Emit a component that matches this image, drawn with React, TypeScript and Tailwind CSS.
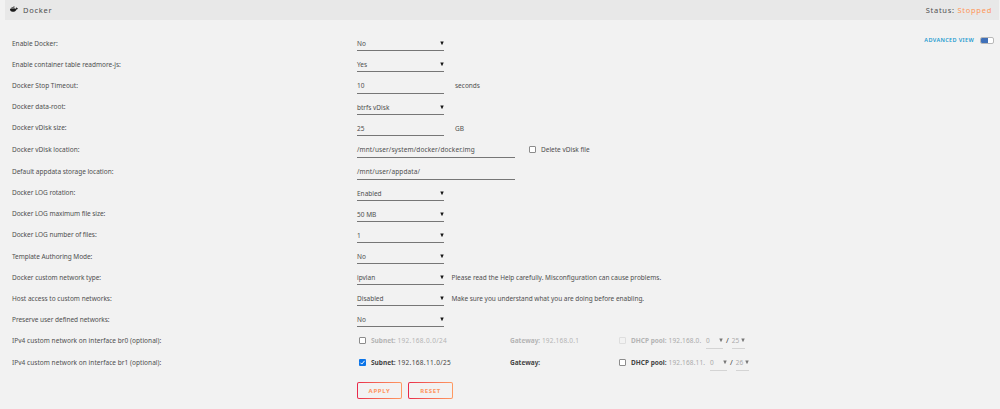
import type { ReactNode } from "react";
import { FaDocker } from "react-icons/fa";

function Caret({ dim = false }: { dim?: boolean }) {
  return (
    <svg viewBox="0 0 4 4" className={`h-1 w-1 shrink-0 ${dim ? "fill-[#777]" : "fill-[#161616]"}`}>
      <path d="M0.3 0.4H3.7L2.3 3.8H1.7Z" />
    </svg>
  );
}

function Field({ value, wide = false, select = false }: { value: string; wide?: boolean; select?: boolean }) {
  return (
    <div
      className={`flex h-full items-start justify-between border-b border-[#767676] pt-2 ${wide ? "w-[158px] tracking-[0.12px]" : "w-[87px]"}`}
    >
      <span>{value}</span>
      {select && (
        <span className="flex h-[10px] items-center">
          <Caret />
        </span>
      )}
    </div>
  );
}

type RowProps = { label: string; tall?: boolean; raised?: boolean; tracking?: string; children: ReactNode };

function Row({ label, tall = false, raised = false, tracking = "", children }: RowProps) {
  return (
    <div className={`flex ${tall ? "h-[22px]" : "h-[21px]"}`}>
      <div className={`w-[345px] shrink-0 ${raised ? "pt-[7px]" : "pt-2"} ${tracking}`}>{label}</div>
      {children}
    </div>
  );
}

function Box({ checked = false, dim = false }: { checked?: boolean; dim?: boolean }) {
  if (checked) {
    return (
      <svg viewBox="0 0 7 7" className="h-[7px] w-[7px] shrink-0">
        <rect width="7" height="7" rx="1" fill="#0b74e8" />
        <path d="M1.4 3.7L2.8 5.1L5.6 1.8" fill="none" stroke="#fff" strokeWidth="1" />
      </svg>
    );
  }
  return (
    <span
      className={`block h-[7px] w-[7px] shrink-0 rounded-[1px] border ${dim ? "border-[#dedede] bg-[#f2f2f2]" : "border-[#8c8c8c] bg-white"}`}
    />
  );
}

type NetworkProps = {
  label: string;
  subnet: string;
  gateway: string;
  pool: string;
  mask: string;
  active?: boolean;
};

function NetworkRow({ label, subnet, gateway, pool, mask, active = false }: NetworkProps) {
  const tone = active ? "text-[#444]" : "text-[#b4b4b4]";
  return (
    <Row label={label} tall tracking="tracking-[0.04px]">
      <div className={`flex h-[27px] items-center ${tone}`}>
        <div className="flex w-[153px] items-center gap-[5px] pl-[2px]">
          <Box checked={active} />
          <span>
            <b>Subnet:</b> <span className="tracking-[0.35px]">{subnet}</span>
          </span>
        </div>
        <div className="w-[109px]">
          <b>Gateway:</b> <span className="tracking-[0.2px]">{gateway}</span>
        </div>
        <div className="flex items-center">
          <Box dim={!active} />
          <b className="ml-[5px] w-[35px]">DHCP pool:</b>
          <span className={`ml-[2.5px] tracking-[0.16px] text-[#aaa] ${active ? "w-[38px]" : "w-[34px]"}`}>{pool}</span>
          <span className="ml-[3.5px] flex h-4 w-[17px] items-center justify-between border-b border-[#d4d4d4] text-[#aaa]">
            0 <Caret dim />
          </span>
          <span className="mx-[3px] text-[7.5px] text-[#444]">/</span>
          <span className="flex h-4 w-[13px] items-center justify-between border-b border-[#d4d4d4] text-[#aaa]">
            {mask} <Caret dim />
          </span>
        </div>
      </div>
    </Row>
  );
}

function ActionButton({ children }: { children: ReactNode }) {
  return (
    <button className="h-[17px] w-[45px] rounded-[2px] bg-linear-to-r from-[#e8274a] to-[#ff9a62] p-px">
      <span className="flex h-full items-center justify-center rounded-[1px] bg-[#f2f2f2] pt-px text-[6px] font-bold tracking-[0.65px] text-[#ff9560]">
        {children}
      </span>
    </button>
  );
}

export default function App() {
  return (
    <div className="h-[409px] w-[1000px] overflow-hidden bg-[#f2f2f2] font-['Noto_Sans','Open_Sans',sans-serif] text-[6.5px] leading-[11px] whitespace-nowrap text-[#4f4f4f]">
      <header className="ml-[5px] flex h-5 w-[994px] items-center justify-between bg-[#e8e8e8] pr-[7px] pl-[5px] text-[7.5px]">
        <div className="flex items-center gap-[5px]">
          <FaDocker className="mb-[2px] h-2 w-2 text-[#1c1c1c]" />
          <span className="tracking-[0.75px]">Docker</span>
        </div>
        <div className="tracking-[0.73px]">
          Status: <span className="text-[#ff9557]">Stopped</span>
        </div>
      </header>
      <div className="flex justify-between pt-[10px] pl-3">
        <main>
          <Row label="Enable Docker:">
            <Field value="No" select />
          </Row>
          <Row label="Enable container table readmore-js:">
            <Field value="Yes" select />
          </Row>
          <Row label="Docker Stop Timeout:" tall>
            <Field value="10" />
            <span className="ml-[11px] pt-2">seconds</span>
          </Row>
          <Row label="Docker data-root:" raised>
            <Field value="btrfs vDisk" select />
          </Row>
          <Row label="Docker vDisk size:" raised>
            <Field value="25" />
            <span className="ml-[11px] pt-2">GB</span>
          </Row>
          <Row label="Docker vDisk location:" tall>
            <Field value="/mnt/user/system/docker/docker.img" wide />
            <div className="ml-[14px] flex h-[27px] items-center gap-[5px]">
              <Box />
              <span>Delete vDisk file</span>
            </div>
          </Row>
          <Row label="Default appdata storage location:" tall tracking="tracking-[-0.02px]">
            <Field value="/mnt/user/appdata/" wide />
          </Row>
          <Row label="Docker LOG rotation:" raised tracking="tracking-[-0.06px]">
            <Field value="Enabled" select />
          </Row>
          <Row label="Docker LOG maximum file size:" raised tracking="tracking-[-0.06px]">
            <Field value="50 MB" select />
          </Row>
          <Row label="Docker LOG number of files:" raised tracking="tracking-[-0.06px]">
            <Field value="1" select />
          </Row>
          <Row label="Template Authoring Mode:" tracking="tracking-[-0.06px]">
            <Field value="No" select />
          </Row>
          <Row label="Docker custom network type:" tracking="tracking-[-0.02px]">
            <Field value="ipvlan" select />
            <span className="ml-[7.5px] pt-2">Please read the Help carefully. Misconfiguration can cause problems.</span>
          </Row>
          <Row label="Host access to custom networks:">
            <Field value="Disabled" select />
            <span className="ml-[7.5px] pt-2 tracking-[-0.03px]">
              Make sure you understand what you are doing before enabling.
            </span>
          </Row>
          <Row label="Preserve user defined networks:" tracking="tracking-[-0.03px]">
            <Field value="No" select />
          </Row>
          <NetworkRow
            label="IPv4 custom network on interface br0 (optional):"
            subnet="192.168.0.0/24"
            gateway="192.168.0.1"
            pool="192.168.0."
            mask="25"
          />
          <NetworkRow
            label="IPv4 custom network on interface br1 (optional):"
            subnet="192.168.11.0/25"
            gateway=""
            pool="192.168.11."
            mask="26"
            active
          />
          <div className="mt-[11px] ml-[345px] flex gap-[6px]">
            <ActionButton>APPLY</ActionButton>
            <ActionButton>RESET</ActionButton>
          </div>
        </main>
        <div className="flex h-[21px] items-center gap-[6px] pr-[6px] text-[5.5px] font-semibold tracking-[0.37px] text-[#1c9bd0]">
          <span>ADVANCED VIEW</span>
          <span className="flex h-[7px] w-[14px] overflow-hidden rounded-[2px] border border-[#b8b8b8] bg-white">
            <span className="h-full w-[7px] bg-[#3f70b8]" />
          </span>
        </div>
      </div>
    </div>
  );
}
